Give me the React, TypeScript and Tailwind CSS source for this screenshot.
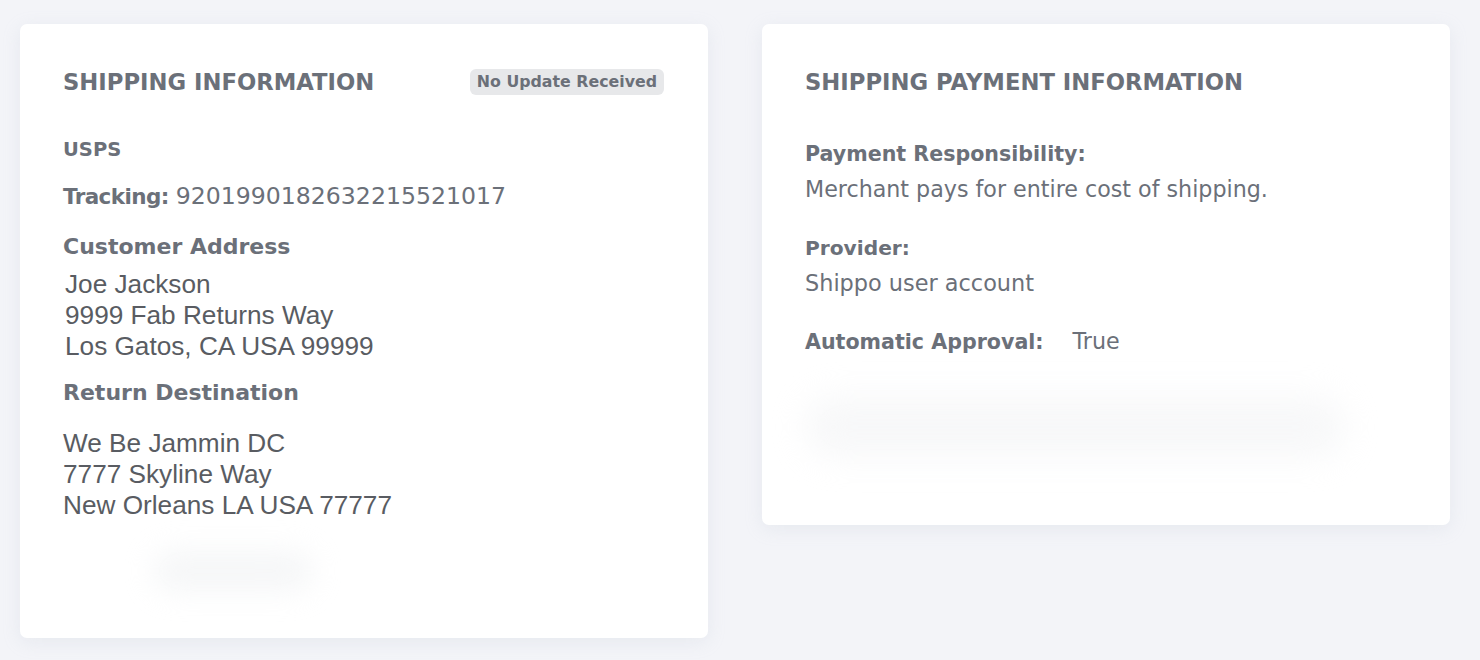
import React from "react";

const ui = { fontFamily: '"DejaVu Sans", "Noto Sans", sans-serif' };
const arial = { fontFamily: '"Liberation Sans", Arial, sans-serif' };

export default function App() {
  return (
    <div className="w-[1480px] h-[660px] bg-[#f3f4f8] overflow-hidden text-[#6b7079]" style={ui}>
      <div className="flex items-start gap-[54px] pl-[20px] pt-[24px]">
        {/* Left card */}
        <div className="w-[688px] h-[614px] bg-white rounded-[7px] shadow-[0_4px_18px_rgba(180,186,205,0.18)] pl-[43px] pr-[44px] pt-[42px] overflow-hidden">
          <div className="flex items-center justify-between">
            <h2 className="text-[22.7px] font-bold leading-[30px] pt-[1px]">SHIPPING INFORMATION</h2>
            <span className="bg-[#e7e8ea] rounded-[6px] px-[7px] h-[26px] flex items-center text-[15.8px] font-bold">No Update Received</span>
          </div>
          <div className="mt-[40px] text-[19.5px] font-bold leading-[26px]">USPS</div>
          <div className="mt-[18px] flex items-baseline leading-[30px]">
            <span className="text-[21.5px] font-bold tracking-[-0.6px]">Tracking:</span>
            <span className="ml-[7px] text-[23.6px]">9201990182632215521017</span>
          </div>
          <div className="mt-[20px] text-[22px] font-bold leading-[30px]">Customer Address</div>
          <div className="mt-[7px] pl-[2px] text-[26.2px] leading-[31px] text-[#595c62]" style={arial}>
            <div>Joe Jackson</div>
            <div>9999 Fab Returns Way</div>
            <div>Los Gatos, CA USA 99999</div>
          </div>
          <div className="mt-[16px] text-[22px] font-bold leading-[30px]">Return Destination</div>
          <div className="mt-[20px] text-[26.2px] leading-[31px] text-[#595c62]" style={arial}>
            <div>We Be Jammin DC</div>
            <div>7777 Skyline Way</div>
            <div>New Orleans LA USA 77777</div>
          </div>
          <div className="mt-[30px] ml-[90px] w-[160px] h-[40px] rounded-full bg-[#eceef0] blur-[14px] opacity-50"></div>
        </div>

        {/* Right card */}
        <div className="w-[688px] h-[501px] bg-white rounded-[7px] shadow-[0_4px_18px_rgba(180,186,205,0.18)] pl-[43px] pr-[44px] pt-[42px]">
          <h2 className="text-[22.7px] font-bold leading-[30px] pt-[1px]">SHIPPING PAYMENT INFORMATION</h2>
          <div className="mt-[42px] text-[20.6px] font-bold leading-[30px]">Payment Responsibility:</div>
          <div className="mt-[5px] text-[22.2px] leading-[30px]">Merchant pays for entire cost of shipping.</div>
          <div className="mt-[29px] text-[20.2px] font-bold leading-[30px]">Provider:</div>
          <div className="mt-[5px] text-[22.4px] leading-[30px]">Shippo user account</div>
          <div className="mt-[28px] leading-[30px] flex items-baseline">
            <span className="text-[20.6px] font-bold">Automatic Approval:</span>
            <span className="ml-[29px] text-[22.2px]">True</span>
          </div>
          <div className="mt-[40px] w-[540px] h-[60px] rounded-full bg-[#f0f1f3] blur-[16px] opacity-50"></div>
        </div>
      </div>
    </div>
  );
}
